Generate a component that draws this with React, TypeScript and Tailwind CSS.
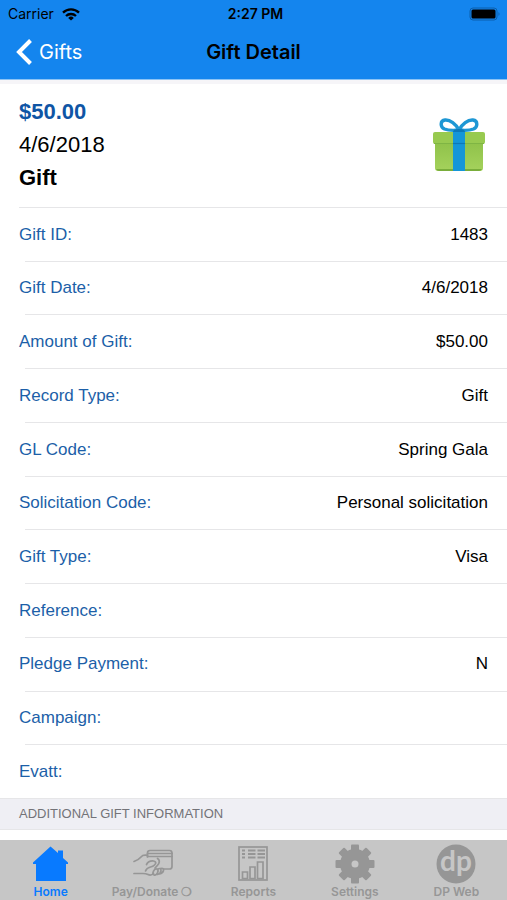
import { ReactNode } from 'react'

const fields = [
    { label: 'Gift ID:', value: '1483' },
    { label: 'Gift Date:', value: '4/6/2018' },
    { label: 'Amount of Gift:', value: '$50.00' },
    { label: 'Record Type:', value: 'Gift' },
    { label: 'GL Code:', value: 'Spring Gala' },
    { label: 'Solicitation Code:', value: 'Personal solicitation' },
    { label: 'Gift Type:', value: 'Visa' },
    { label: 'Reference:', value: '' },
    { label: 'Pledge Payment:', value: 'N' },
    { label: 'Campaign:', value: '' },
    { label: 'Evatt:', value: '' },
]

function StatusBar() {
    return (
        <div className="grid h-7 grid-cols-3 items-center pl-2 pr-1 text-sm font-['Inter',sans-serif]">
            <div className="flex items-center gap-2">
                <span>Carrier</span>
                <svg width="18" height="13" viewBox="0 0 18 13" fill="none" stroke="currentColor" strokeWidth="2.3">
                    <path d="M1 4.7a11.5 11.5 0 0 1 16 0" />
                    <path d="M4 8a7.2 7.2 0 0 1 10 0" />
                    <path d="M9 12.5 6.2 9.9a4 4 0 0 1 5.6 0Z" fill="currentColor" stroke="none" />
                </svg>
            </div>
            <span className="text-center font-semibold">2:27 PM</span>
            <svg className="justify-self-end" width="34" height="14" viewBox="0 0 34 14">
                <rect x="1" y="1" width="27" height="12" rx="3" fill="none" stroke="#0b5fac" />
                <rect x="2.5" y="2.5" width="24" height="9" rx="1.5" fill="#000" />
                <path d="M29.5 5q2 2 0 4Z" fill="#0b5fac" />
            </svg>
        </div>
    )
}

function Header() {
    return (
        <header className="border-b border-[#8dc4f5] bg-[#1485ee] text-black">
            <StatusBar />
            <div className="grid h-[51px] grid-cols-[1fr_auto_1fr] items-center px-4 pb-[3px] font-['Inter',sans-serif]">
                <button className="flex items-center gap-[7px] text-xl text-white">
                    <svg width="16" height="26" viewBox="0 0 16 26" fill="none" stroke="currentColor" strokeWidth="4">
                        <path d="M14.5 1.5 3 13l11.5 11.5" />
                    </svg>
                    Gifts
                </button>
                <h1 className="text-xl font-semibold">Gift Detail</h1>
            </div>
        </header>
    )
}

function GiftIcon() {
    return (
        <svg width="54" height="54" viewBox="0 0 54 54">
            <defs>
                <linearGradient id="box" x1="0" y1="0" x2="0" y2="1">
                    <stop offset="0" stopColor="#8fc24a" />
                    <stop offset="1" stopColor="#a5d25c" />
                </linearGradient>
            </defs>
            <path d="M3 24h48v26a3 3 0 0 1-3 3H6a3 3 0 0 1-3-3Z" fill="url(#box)" />
            <path d="M4 51q1 2 3 2h40q2 0 3-2Z" fill="#79ad3b" />
            <rect x="1" y="14" width="52" height="12" rx="2" fill="#98ca50" />
            <path d="M2 25.5h50" stroke="#7fb544" strokeWidth="1.2" />
            <rect x="21" y="14" width="12" height="39" fill="#1596d8" />
            <path d="M21 25.5h12" stroke="#0d78b8" strokeWidth="1.2" />
            <path
                d="M27 12C24 6 18 1.5 13 2 8 2.5 8 9 12.5 11q5 2 14.5 1ZM27 12C30 6 36 1.5 41 2 46 2.5 46 9 41.5 11q-5 2-14.5 1Z"
                fill="none"
                stroke="#1e97d4"
                strokeWidth="3.4"
            />
            <path d="M21 14q0-3 6-3t6 3Z" fill="#0d78b8" />
        </svg>
    )
}

function HomeIcon() {
    return (
        <svg width="36" height="40" viewBox="0 0 36 40" fill="currentColor">
            <path d="M17.5 2.5 25 9V6.500h5V14l5 4.500v1.500h-2V37H3V20H0v-1.500Z" />
        </svg>
    )
}

function DonateIcon() {
    return (
        <svg width="42" height="40" viewBox="-1 0 42 40" fill="none" stroke="currentColor" strokeWidth="1.7" strokeLinecap="round" strokeLinejoin="round">
            <path d="M15.5 13V9q0-2.5 2.5-2.500h19.500Q40 6.500 40 9v13.500q0 2.500-2.500 2.500H32" />
            <path d="M15.5 9.500H40M15.5 12.500H40" />
            <path d="M2 17.500q4.500-1.500 7-4.500 1.500-1.800 4-1.800h2.500" />
            <path d="M14.500 20.500q2-4 7-3.500 4 1 1 4-1.500 1.500-4 2-4 1-5 4" />
            <path d="M25.5 14.500q3 2 1 5.500-1.500 2-3.500 4" />
            <path d="M2 29.500h9q3 0 5 1 3 1.500 5.500-1" />
            <ellipse cx="23.500" cy="28" rx="2.200" ry="3.300" transform="rotate(25 23.500 28)" />
            <path d="M26 25q3-1.500 3 1.500t-3.500 4M29 24.500q3-.5 2.500 2t-4 3.500" />
        </svg>
    )
}

function ReportsIcon() {
    return (
        <svg width="32" height="40" viewBox="0 0 32 40" fill="none" stroke="currentColor" strokeWidth="1.7">
            <rect x="2" y="3" width="28" height="33" />
            <path d="M5 6.500h3M11 6.500h7.500M20.500 6.500H28M5 10h3M11 10h7.500M20.500 10H28M5 13.500h3M11 13.500h7.500M20.500 13.500H28" strokeWidth="2" />
            <path d="M5.500 34.500V28h5v6.500ZM13 34.500V23h5v11.500ZM20.500 34.500V18H26v16.500Z" />
        </svg>
    )
}

function SettingsIcon() {
    return (
        <svg width="40" height="40" viewBox="-20 -20 40 40">
            <g fill="currentColor">
                {[0, 45, 90, 135].map((angle) => (
                    <rect key={angle} x="-4" y="-19.5" width="8" height="39" rx="1" transform={`rotate(${angle})`} />
                ))}
                <circle r="15" />
            </g>
            <circle r="3.5" fill="#c6c6c6" />
        </svg>
    )
}

function DpIcon() {
    return (
        <svg width="40" height="40" viewBox="0 0 40 40">
            <circle cx="20" cy="20" r="19.5" fill="currentColor" />
            <text x="20" y="27" textAnchor="middle" fontSize="28" fontWeight="700" fontFamily="Lato, sans-serif" fill="#c6c6c6">dp</text>
        </svg>
    )
}

function Tab({ label, active, children }: { label: string; active?: boolean; children: ReactNode }) {
    return (
        <button className={`flex flex-col items-center pt-1 ${active ? 'text-[#087aff]' : 'text-[#969696]'}`}>
            {children}
            <span className="whitespace-nowrap text-xs font-semibold leading-4">{label}</span>
        </button>
    )
}

export default function App() {
    return (
        <div className="flex min-h-screen flex-col bg-white font-['Liberation_Sans',Arial,sans-serif] text-black">
            <Header />
            <main className="flex flex-1 flex-col">
                <section className="flex items-center justify-between border-t-4 border-[#f6f5f8] pb-[13px] pl-[19px] pr-[21px] pt-[11px]">
                    <div className="text-[22px] leading-[33px]">
                        <p className="font-bold text-[#0f55a5]">$50.00</p>
                        <p>4/6/2018</p>
                        <p className="font-bold">Gift</p>
                    </div>
                    <GiftIcon />
                </section>
                <div className="ml-[19px] border-t border-[#e6e6e8]" />
                <dl className="grid flex-1 auto-rows-fr">
                    {fields.map((field) => (
                        <div key={field.label} className="ml-[25px] flex items-center justify-between border-b border-[#e6e6e8] pr-[19px] text-[17px] last:ml-0 last:pl-[25px]">
                            <dt className="-ml-1.5 text-[#1c5fa8]">{field.label}</dt>
                            <dd>{field.value}</dd>
                        </div>
                    ))}
                </dl>
                <h2 className="mb-[10px] border-b border-[#e6e6e8] bg-[#efeff4] px-[19px] text-[13px] leading-[30px] text-[#737378]">
                    ADDITIONAL GIFT INFORMATION
                </h2>
            </main>
            <nav className="grid h-[60px] grid-cols-5 bg-[#c6c6c6] font-['Inter',sans-serif]">
                <Tab label="Home" active><HomeIcon /></Tab>
                <Tab label="Pay/Donate ❍"><DonateIcon /></Tab>
                <Tab label="Reports"><ReportsIcon /></Tab>
                <Tab label="Settings"><SettingsIcon /></Tab>
                <Tab label="DP Web"><DpIcon /></Tab>
            </nav>
        </div>
    )
}
